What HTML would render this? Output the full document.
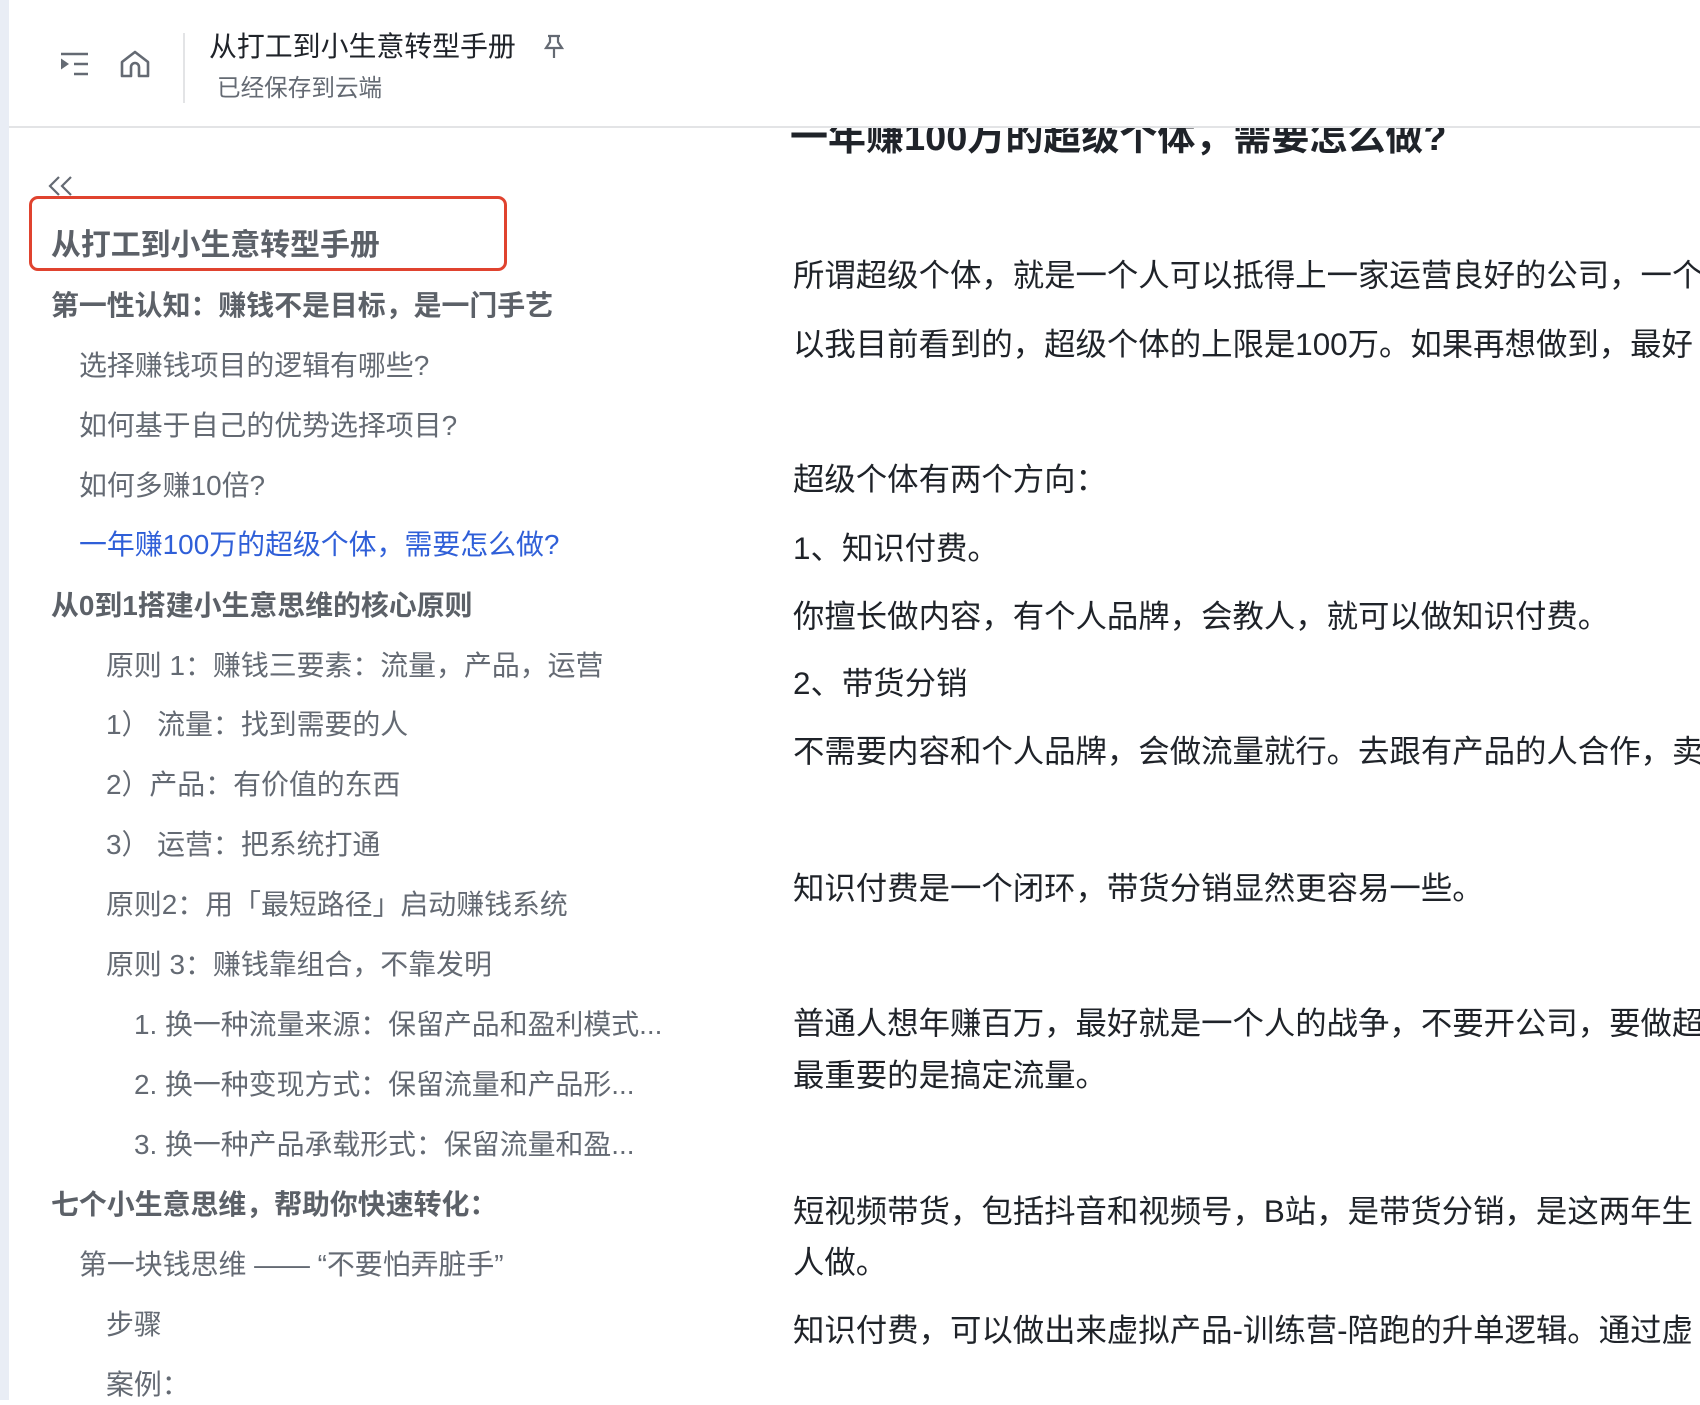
<!DOCTYPE html>
<html><head><meta charset="utf-8"><style>
html,body{margin:0;padding:0}
body{width:1700px;height:1400px;overflow:hidden;position:relative;background:#fff;font-family:"Liberation Sans","Noto Sans CJK SC",sans-serif}
.strip{position:absolute;left:0;top:0;width:9px;height:1400px;background:#e9edf5}
.hdr{position:absolute;left:9px;top:0;right:0;height:126px;background:#fff;border-bottom:2px solid #e3e4e6;z-index:5}
.t{position:absolute;white-space:nowrap;line-height:40px}
.s{font-size:27.9px;color:#646a73}
.b{font-weight:bold;color:#5c6168}
.c{font-size:31.4px;color:#1f2329;left:793px}
</style></head><body>
<div class="strip"></div>
<div class="hdr">
<svg style="position:absolute;left:51px;top:50px" width="30" height="28" viewBox="0 0 30 28"><path d="M1 4H28M14 14H28M14 24H28" stroke="#646a73" stroke-width="2.6" fill="none"/><path d="M1 8.5L9 14L1 19.5Z" fill="#646a73"/></svg>
<svg style="position:absolute;left:111px;top:50px" width="30" height="28" viewBox="0 0 30 28"><path d="M2 12L15 2L28 12V26H19V17A4 4 0 0 0 11 17V26H2Z" stroke="#646a73" stroke-width="2.6" fill="none" stroke-linejoin="round"/></svg>
<div style="position:absolute;left:174px;top:33px;width:2px;height:70px;background:#e3e4e6"></div>
<div class="t" style="left:200px;top:27px;font-size:27.9px;color:#1f2329">从打工到小生意转型手册</div>
<svg style="position:absolute;left:535px;top:34px" width="20" height="25" viewBox="0 0 20 25"><path d="M4 2H16M6 2V8L2 14H18L14 8V2M10 14V24" stroke="#646a73" stroke-width="2.2" fill="none"/></svg>
<div class="t" style="left:208px;top:69px;font-size:23.6px;color:#646a73">已经保存到云端</div>
</div>
<div class="t" style="left:790px;top:118px;font-size:38px;font-weight:bold;color:#1f2329">一年赚100万的超级个体，需要怎么做?</div>
<svg style="position:absolute;left:47px;top:174px" width="30" height="24" viewBox="0 0 30 24"><path d="M12 3L3 12L12 21M24 3L15 12L24 21" stroke="#646a73" stroke-width="2.2" fill="none"/></svg>
<div style="position:absolute;left:29px;top:196px;width:472px;height:69px;border:3px solid #e0432f;border-radius:9px"></div>
<div class="t b" style="left:51px;top:226px;font-size:29.9px">从打工到小生意转型手册</div>
<div class="t s b" style="left:51px;top:286px">第一性认知：赚钱不是目标，是一门手艺</div>
<div class="t s" style="left:79px;top:346px">选择赚钱项目的逻辑有哪些?</div>
<div class="t s" style="left:79px;top:406px">如何基于自己的优势选择项目?</div>
<div class="t s" style="left:79px;top:466px">如何多赚10倍?</div>
<div class="t s" style="left:79px;top:525px;color:#2f5fd8">一年赚100万的超级个体，需要怎么做?</div>
<div class="t s b" style="left:51px;top:586px">从0到1搭建小生意思维的核心原则</div>
<div class="t s" style="left:106px;top:646px">原则 1：赚钱三要素：流量，产品，运营</div>
<div class="t s" style="left:106px;top:705px">1） 流量：找到需要的人</div>
<div class="t s" style="left:106px;top:765px">2）产品：有价值的东西</div>
<div class="t s" style="left:106px;top:825px">3） 运营：把系统打通</div>
<div class="t s" style="left:106px;top:885px">原则2：用「最短路径」启动赚钱系统</div>
<div class="t s" style="left:106px;top:945px">原则 3：赚钱靠组合，不靠发明</div>
<div class="t s" style="left:134px;top:1005px">1. 换一种流量来源：保留产品和盈利模式...</div>
<div class="t s" style="left:134px;top:1065px">2. 换一种变现方式：保留流量和产品形...</div>
<div class="t s" style="left:134px;top:1125px">3. 换一种产品承载形式：保留流量和盈...</div>
<div class="t s b" style="left:51px;top:1185px">七个小生意思维，帮助你快速转化：</div>
<div class="t s" style="left:79px;top:1245px">第一块钱思维 —— “不要怕弄脏手”</div>
<div class="t s" style="left:106px;top:1305px">步骤</div>
<div class="t s" style="left:106px;top:1365px">案例：</div>
<div class="t c" style="top:256px">所谓超级个体，就是一个人可以抵得上一家运营良好的公司，一个人</div>
<div class="t c" style="top:325px">以我目前看到的，超级个体的上限是100万。如果再想做到，最好</div>
<div class="t c" style="top:460px">超级个体有两个方向：</div>
<div class="t c" style="top:529px">1、知识付费。</div>
<div class="t c" style="top:597px">你擅长做内容，有个人品牌，会教人，就可以做知识付费。</div>
<div class="t c" style="top:664px">2、带货分销</div>
<div class="t c" style="top:732px">不需要内容和个人品牌，会做流量就行。去跟有产品的人合作，卖</div>
<div class="t c" style="top:869px">知识付费是一个闭环，带货分销显然更容易一些。</div>
<div class="t c" style="top:1004px">普通人想年赚百万，最好就是一个人的战争，不要开公司，要做超</div>
<div class="t c" style="top:1056px">最重要的是搞定流量。</div>
<div class="t c" style="top:1192px">短视频带货，包括抖音和视频号，B站，是带货分销，是这两年生</div>
<div class="t c" style="top:1243px">人做。</div>
<div class="t c" style="top:1311px">知识付费，可以做出来虚拟产品-训练营-陪跑的升单逻辑。通过虚</div>
</body></html>
